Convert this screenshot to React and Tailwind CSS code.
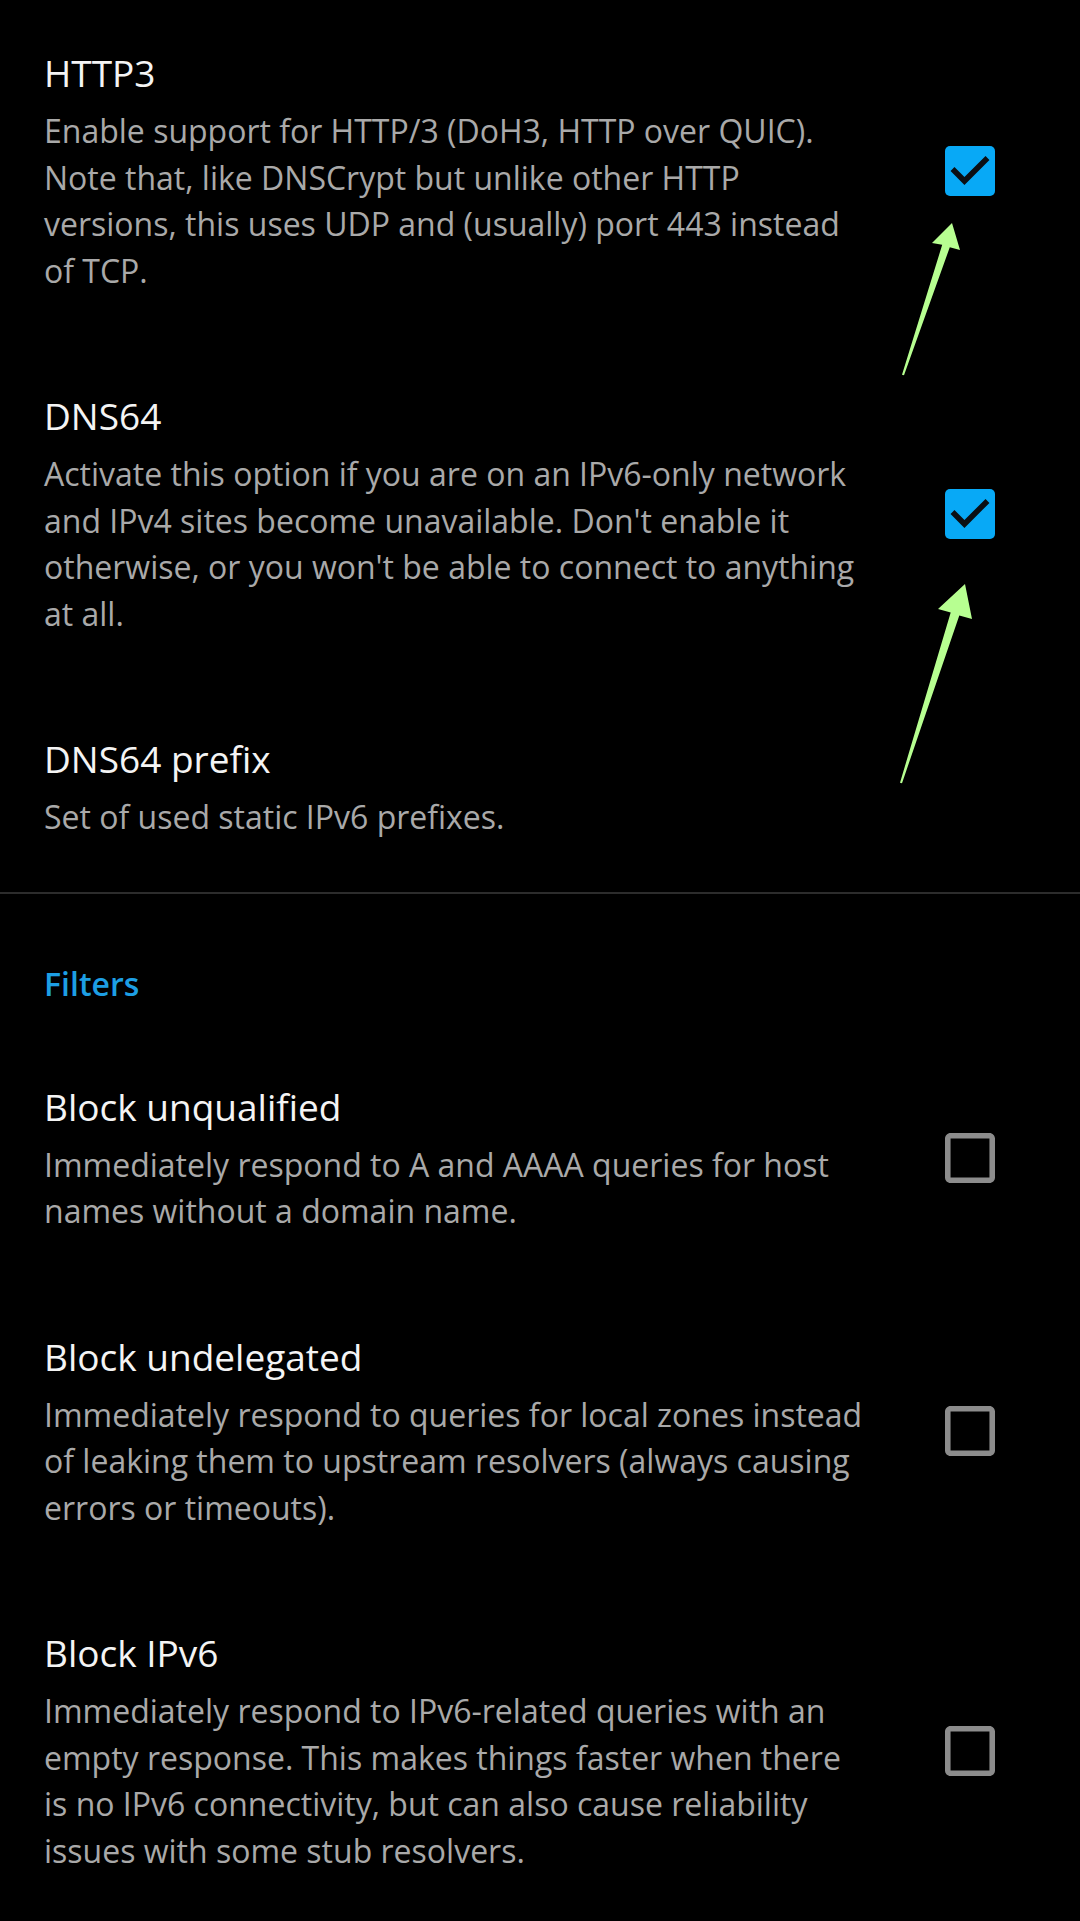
import React from "react";

const FONT = { fontFamily: '"Open Sans", "Noto Sans", sans-serif' };

function Checked() {
  return (
    <svg width="50" height="50" viewBox="3 3 18 18" className="shrink-0">
      <rect x="3" y="3" width="18" height="18" rx="1.8" fill="#08a9f6" />
      <path d="M10 17l-5-5 1.41-1.41L10 14.17l7.59-7.59L19 8l-9 9z" fill="#0b0f14" />
    </svg>
  );
}

function Unchecked() {
  return (
    <svg width="50" height="50" viewBox="3 3 18 18" className="shrink-0">
      <path
        d="M19 5v14H5V5h14m0-2H5c-1.1 0-2 .9-2 2v14c0 1.1.9 2 2 2h14c1.1 0 2-.9 2-2V5c0-1.1-.9-2-2-2z"
        fill="#8c8c8c"
      />
    </svg>
  );
}

function Item({ title, lines, box }) {
  return (
    <div className="flex items-center pl-[44px] pr-[85px] pt-[47px] pb-[49px]">
      <div className="flex-1">
        <div className="text-[37px] leading-[52px] text-[#f4f4f4]">{title}</div>
        <div className="mt-[9px] text-[32px] leading-[46.5px] text-[#a9a9a9]">
          {lines.map((l, i) => (
            <div key={i} className="whitespace-nowrap">{l}</div>
          ))}
        </div>
      </div>
      {box === "on" && <Checked />}
      {box === "off" && <Unchecked />}
    </div>
  );
}

export default function App() {
  return (
    <div className="relative w-[1080px] min-h-[1921px] bg-black overflow-hidden" style={FONT}>
      <Item
        title="HTTP3"
        box="on"
        lines={[
          "Enable support for HTTP/3 (DoH3, HTTP over QUIC).",
          "Note that, like DNSCrypt but unlike other HTTP",
          "versions, this uses UDP and (usually) port 443 instead",
          "of TCP.",
        ]}
      />
      <Item
        title="DNS64"
        box="on"
        lines={[
          "Activate this option if you are on an IPv6-only network",
          "and IPv4 sites become unavailable. Don't enable it",
          "otherwise, or you won't be able to connect to anything",
          "at all.",
        ]}
      />
      <Item title="DNS64 prefix" lines={["Set of used static IPv6 prefixes."]} />
      <div className="mt-[2px] h-[2px] bg-[#2c2c2c]" />
      <div className="pl-[44px] pt-[66px] pb-[26px] text-[32px] leading-[48px] font-semibold text-[#1d9fe4]">
        Filters
      </div>
      <Item
        title="Block unqualified"
        box="off"
        lines={[
          "Immediately respond to A and AAAA queries for host",
          "names without a domain name.",
        ]}
      />
      <Item
        title="Block undelegated"
        box="off"
        lines={[
          "Immediately respond to queries for local zones instead",
          "of leaking them to upstream resolvers (always causing",
          "errors or timeouts).",
        ]}
      />
      <Item
        title="Block IPv6"
        box="off"
        lines={[
          "Immediately respond to IPv6-related queries with an",
          "empty response. This makes things faster when there",
          "is no IPv6 connectivity, but can also cause reliability",
          "issues with some stub resolvers.",
        ]}
      />

      <svg
        className="absolute left-0 top-0 pointer-events-none"
        width="1080"
        height="1921"
        viewBox="0 0 1080 1921"
      >
        <polygon
          points="952,223 960,250 949.8,247.2 904,375.3 902,374.7 942.2,244.8 932,243"
          fill="#b7ff91"
        />
        <polygon
          points="965,584 972,619 959.3,615.4 902,783.3 900,782.7 950.7,612.6 938,609"
          fill="#b7ff91"
        />
      </svg>
    </div>
  );
}
